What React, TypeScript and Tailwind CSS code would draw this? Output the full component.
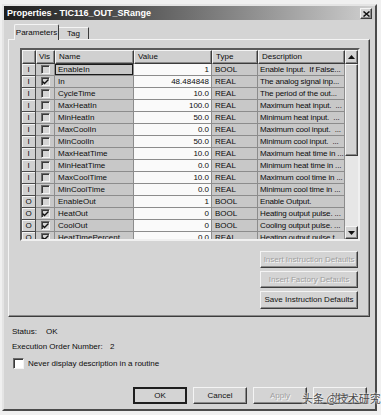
import React from 'react';

type Param = {
  io: 'I' | 'O';
  vis: boolean;
  name: string;
  value: string;
  type: string;
  desc: string;
};

const params: Param[] = [
  { io: 'I', vis: false, name: 'EnableIn', value: '1', type: 'BOOL', desc: 'Enable Input.  If False...' },
  { io: 'I', vis: true, name: 'In', value: '48.484848', type: 'REAL', desc: 'The analog signal inp...' },
  { io: 'I', vis: false, name: 'CycleTime', value: '10.0', type: 'REAL', desc: 'The period of the out...' },
  { io: 'I', vis: false, name: 'MaxHeatIn', value: '100.0', type: 'REAL', desc: 'Maximum heat input.  ...' },
  { io: 'I', vis: false, name: 'MinHeatIn', value: '50.0', type: 'REAL', desc: 'Minimum heat input.  ...' },
  { io: 'I', vis: false, name: 'MaxCoolIn', value: '0.0', type: 'REAL', desc: 'Maximum cool input.  ...' },
  { io: 'I', vis: false, name: 'MinCoolIn', value: '50.0', type: 'REAL', desc: 'Minimum cool input.  ...' },
  { io: 'I', vis: false, name: 'MaxHeatTime', value: '10.0', type: 'REAL', desc: 'Maximum heat time in ...' },
  { io: 'I', vis: false, name: 'MinHeatTime', value: '0.0', type: 'REAL', desc: 'Minimum heat time in ...' },
  { io: 'I', vis: false, name: 'MaxCoolTime', value: '10.0', type: 'REAL', desc: 'Maximum cool time in ...' },
  { io: 'I', vis: false, name: 'MinCoolTime', value: '0.0', type: 'REAL', desc: 'Minimum cool time in ...' },
  { io: 'O', vis: false, name: 'EnableOut', value: '1', type: 'BOOL', desc: 'Enable Output.' },
  { io: 'O', vis: true, name: 'HeatOut', value: '0', type: 'BOOL', desc: 'Heating output pulse. ...' },
  { io: 'O', vis: true, name: 'CoolOut', value: '0', type: 'BOOL', desc: 'Cooling output pulse. ...' },
  { io: 'O', vis: true, name: 'HeatTimePercent', value: '0.0', type: 'REAL', desc: 'Heating output pulse t...' },
];

const raised =
  'border border-t-[#f4f4f4] border-l-[#f4f4f4] border-r-[#3c3c3c] border-b-[#3c3c3c] shadow-[inset_-1px_-1px_0_#8a8a8a]';

const Check = ({ checked, big }: { checked: boolean; big?: boolean }) => (
  <div
    className={`${big ? 'w-[11px] h-[11px] bg-white' : 'w-[9px] h-[9px] bg-[#d6d6d6]'} flex items-center justify-center border border-t-[#6a6a6a] border-l-[#6a6a6a] border-r-[#f4f4f4] border-b-[#f4f4f4] shadow-[inset_1px_1px_0_#3a3a3a]`}
  >
    {checked && (
      <svg width="7" height="6" viewBox="0 0 7 6">
        <path d="M0.5 2.5 L2.5 4.5 L6.5 0.5" stroke="#111" strokeWidth="1.4" fill="none" />
      </svg>
    )}
  </div>
);

const Arrow = ({ down }: { down?: boolean }) => (
  <svg width="7" height="4" viewBox="0 0 7 4">
    <path d={down ? 'M0 0 H7 L3.5 4 Z' : 'M0 4 H7 L3.5 0 Z'} fill="#111" />
  </svg>
);

const Btn = ({
  children,
  disabled,
  def,
  className = '',
}: {
  children: React.ReactNode;
  disabled?: boolean;
  def?: boolean;
  className?: string;
}) => (
  <div
    className={`flex items-center justify-center whitespace-nowrap bg-[#d4d4d4] ${
      def ? 'border-2 border-[#1e1e1e]' : raised
    } ${disabled ? 'text-[#a0a0a0] [text-shadow:1px_1px_0_#f8f8f8]' : 'text-[#111]'} ${className}`}
  >
    {children}
  </div>
);

const cell = 'h-full flex items-center border-r border-b border-[#8c8c8c] overflow-hidden whitespace-pre';

export default function App() {
  return (
    <div
      className="w-[381px] h-[415px] bg-[#f0f0f0] pt-[4px] pl-[2px] text-[8px] text-[#0c0c0c] leading-none"
      style={{ fontFamily: '"Liberation Sans", Arial, sans-serif' }}
    >
      <div className="relative w-[375px] h-[407px] flex flex-col bg-[#d4d4d4] border-2 border-t-[#e4e4e4] border-l-[#e4e4e4] border-r-[#4a4a4a] border-b-[#4a4a4a]">
        {/* title bar */}
        <div className="h-[14px] flex items-center justify-between pl-[3px] pr-[3px] bg-linear-to-r from-[#1e1e1e] to-[#d0d0d0]">
          <span className="text-white font-bold text-[9px]">Properties - TIC116_OUT_SRange</span>
          <div className={`w-[12px] h-[11px] mt-[1px] flex items-center justify-center bg-[#d4d4d4] ${raised}`}>
            <svg width="7" height="6" viewBox="0 0 7 6">
              <path d="M0.5 0.5 L6.5 5.5 M6.5 0.5 L0.5 5.5" stroke="#111" strokeWidth="1.5" />
            </svg>
          </div>
        </div>

        <div className="flex-1 flex flex-col pl-[4px] pr-[5px]">
          {/* tabs */}
          <div className="flex items-end mt-[4px] pl-[6px] h-[15px] relative z-10">
            <div className="w-[45px] h-[16px] -mb-px flex items-center justify-center bg-[#d4d4d4] border-t border-l border-r border-t-[#f4f4f4] border-l-[#f4f4f4] border-r-[#3c3c3c] rounded-t-[2px]">
              Parameters
            </div>
            <div className="w-[30px] h-[12px] flex items-center justify-center bg-[#d4d4d4] border-t border-r border-t-[#f4f4f4] border-r-[#3c3c3c]">
              Tag
            </div>
          </div>

          {/* panel */}
          <div className="w-[362px] h-[278px] flex flex-col border border-t-[#f4f4f4] border-l-[#f4f4f4] border-r-[#3c3c3c] border-b-[#3c3c3c] shadow-[inset_-1px_-1px_0_#8a8a8a] pl-[11px] pt-[8px]">
            {/* grid */}
            <div className="w-[340px] h-[193px] flex border-2 border-t-[#5a5a5a] border-l-[#5a5a5a] border-r-[#f0f0f0] border-b-[#f0f0f0] overflow-hidden">
              <div className="w-[323px] flex flex-col">
                <div className="flex h-[14px] shrink-0">
                  <div className={`w-[14px] bg-[#d0d0d0] ${raised}`} />
                  <div className={`w-[19px] flex items-center pl-[2px] bg-[#d0d0d0] ${raised}`}>Vis</div>
                  <div className={`w-[79px] flex items-center pl-[3px] bg-[#d0d0d0] ${raised}`}>Name</div>
                  <div className={`w-[78px] flex items-center pl-[3px] bg-[#d0d0d0] ${raised}`}>Value</div>
                  <div className={`w-[46px] flex items-center pl-[3px] bg-[#d0d0d0] ${raised}`}>Type</div>
                  <div className={`w-[87px] flex items-center pl-[3px] bg-[#d0d0d0] ${raised}`}>Description</div>
                </div>
                {params.map((p, i) => (
                  <div key={p.name} className="flex h-[12px] shrink-0">
                    <div className="w-[14px] h-full flex items-center justify-center bg-[#d0d0d0] border-r border-b border-[#4a4a4a] shadow-[inset_1px_1px_0_#f4f4f4]">
                      {p.io}
                    </div>
                    <div className={`w-[19px] justify-center bg-[#c8c8c8] ${cell}`}>
                      <Check checked={p.vis} />
                    </div>
                    <div
                      className={`w-[79px] pl-[3px] bg-[#c8c8c8] ${cell} ${
                        i === 0 ? 'shadow-[inset_0_0_0_1px_#1a1a1a]' : ''
                      }`}
                    >
                      {p.name}
                    </div>
                    <div className={`w-[78px] justify-end pr-[2px] bg-[#fafafa] ${cell}`}>{p.value}</div>
                    <div className={`w-[46px] pl-[3px] bg-[#c8c8c8] ${cell}`}>{p.type}</div>
                    <div className={`w-[87px] pl-[2px] tracking-[-0.15px] bg-[#c8c8c8] ${cell}`}>{p.desc}</div>
                  </div>
                ))}
              </div>
              {/* scrollbar */}
              <div className="w-[13px] flex flex-col">
                <div className={`h-[14px] shrink-0 flex items-center justify-center bg-[#d4d4d4] ${raised}`}>
                  <Arrow />
                </div>
                <div className={`h-[92px] shrink-0 bg-[#d4d4d4] ${raised}`} />
                <div className="flex-1 bg-[#e6e6e6]" />
                <div className={`h-[13px] shrink-0 flex items-center justify-center bg-[#d4d4d4] ${raised}`}>
                  <Arrow down />
                </div>
              </div>
            </div>

            {/* default buttons */}
            <div className="flex flex-col items-end gap-[3px] mt-[10px] pr-[11px]">
              <Btn disabled className="w-[98px] h-[17px]">Insert Instruction Defaults</Btn>
              <Btn disabled className="w-[98px] h-[17px]">Insert Factory Defaults</Btn>
              <Btn className="w-[98px] h-[18px]">Save Instruction Defaults</Btn>
            </div>
          </div>

          {/* status */}
          <div className="pl-[4px] mt-[9px] h-[12px] flex items-center">
            <span className="w-[34px]">Status:</span>
            <span>OK</span>
          </div>
          <div className="pl-[4px] mt-[3px] h-[12px] flex items-center">
            <span className="w-[98px]">Execution Order Number:</span>
            <span>2</span>
          </div>
          <div className="pl-[5px] mt-[5px] h-[11px] flex items-center gap-[4px]">
            <Check checked={false} big />
            <span>Never display description in a routine</span>
          </div>

          {/* dialog buttons */}
          <div className="mt-auto mb-[5px] flex justify-end gap-[6px] pr-[3px]">
            <Btn def className="w-[54px] h-[17px]">OK</Btn>
            <Btn className="w-[54px] h-[17px]">Cancel</Btn>
            <Btn disabled className="w-[54px] h-[17px]">Apply</Btn>
            <Btn className="w-[54px] h-[17px]">Help</Btn>
          </div>
        </div>

        {/* watermark */}
        <div
          className="absolute left-[298px] top-[387px] whitespace-nowrap text-[11px] leading-none text-[#4a4a4a] [text-shadow:0_0_2px_#fff,0_0_2px_#fff]"
          style={{ fontFamily: '"Noto Sans CJK SC", sans-serif' }}
        >
          头条 @技术研究
        </div>
      </div>
    </div>
  );
}
